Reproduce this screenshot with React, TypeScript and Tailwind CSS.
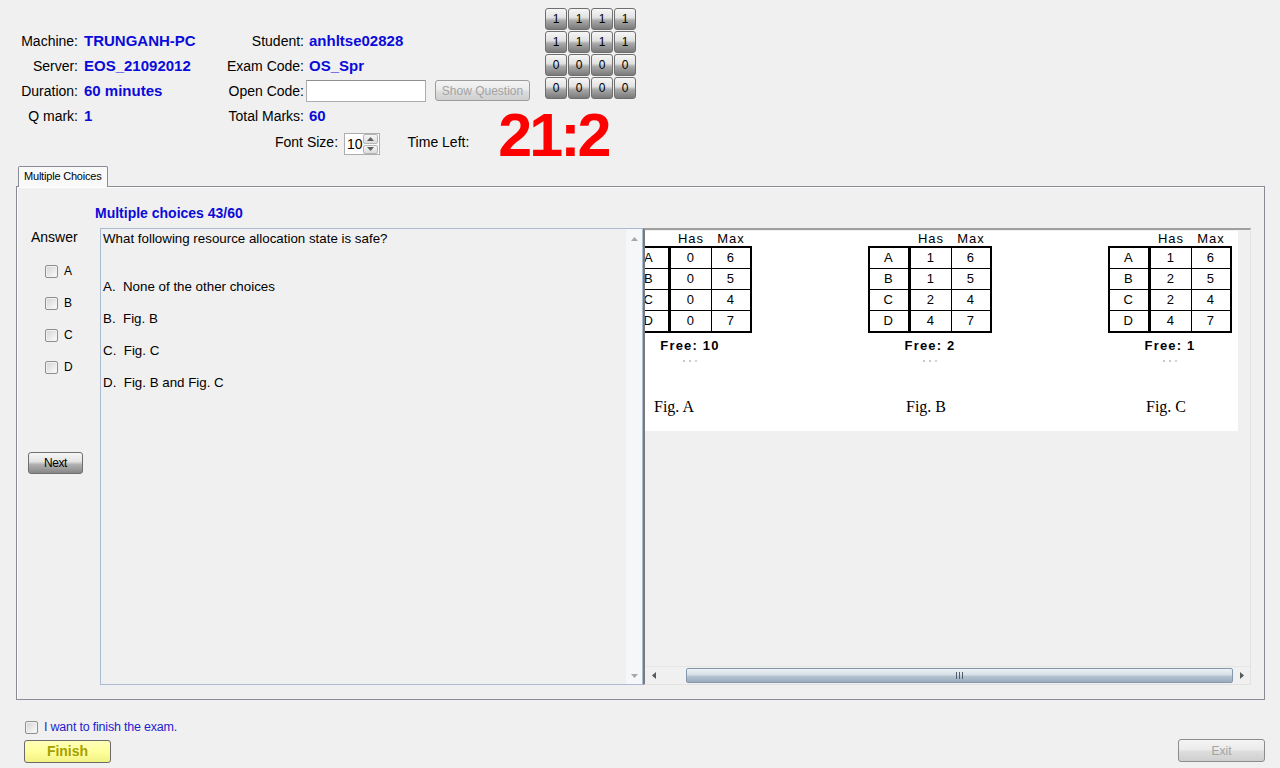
import React from "react";

const BLUE = "text-[#0b0bd9]";

function Check() {
  return (
    <span className="block w-[13px] h-[13px] shrink-0 border border-[#8f8f8f] rounded-[2px] bg-[linear-gradient(135deg,#d2d2d2,#fdfdfd)] shadow-[inset_0_0_0_1px_#f2f2f2]" />
  );
}

function Tri({ dir, color = "#8a8a8a" }: { dir: "up" | "down" | "left" | "right"; color?: string }) {
  const pts: Record<string, string> = {
    up: "0,4 3.5,0 7,4",
    down: "0,0 3.5,4 7,0",
    left: "4,0 0,3.5 4,7",
    right: "0,0 4,3.5 0,7",
  };
  const w = dir === "up" || dir === "down" ? 7 : 4;
  const h = dir === "up" || dir === "down" ? 4 : 7;
  return (
    <svg width={w} height={h} viewBox={`0 0 ${w} ${h}`}>
      <polygon points={pts[dir]} fill={color} />
    </svg>
  );
}

function Row({
  l1,
  v1,
  l2,
  children,
}: {
  l1: string;
  v1: string;
  l2: string;
  children: React.ReactNode;
}) {
  return (
    <div className="flex items-center h-[25px] text-[14px] leading-[16px]">
      <span className="w-[58px] text-right">{l1}</span>
      <span className={`ml-[6px] w-[116px] font-bold text-[15px] ${BLUE}`}>{v1}</span>
      <span className="w-[104px] text-right">{l2}</span>
      {children}
    </div>
  );
}

function GridBtn({ t }: { t: string }) {
  return (
    <div className="w-[22px] h-[22px] rounded-[3px] border border-[#6f6f6f] bg-[linear-gradient(to_bottom,#f6f6f6_0%,#e2e2e2_42%,#a9a9a9_58%,#7a7a7a_100%)] flex items-center justify-center text-[12px] leading-none text-black">
      {t}
    </div>
  );
}

function Header() {
  return (
    <div className="h-[166px] flex items-start shrink-0">
      <div className="w-[530px] shrink-0 pl-[20px] pt-[28px] flex flex-col whitespace-nowrap">
        <Row l1="Machine:" v1="TRUNGANH-PC" l2="Student:">
          <span className={`ml-[5px] font-bold text-[15px] ${BLUE}`}>anhltse02828</span>
        </Row>
        <Row l1="Server:" v1="EOS_21092012" l2="Exam Code:">
          <span className={`ml-[5px] font-bold text-[15px] ${BLUE}`}>OS_Spr</span>
        </Row>
        <Row l1="Duration:" v1="60 minutes" l2="Open Code:">
          <div className="ml-[2px] w-[120px] h-[22px] bg-white border border-[#abadb3] border-t-[#8e8f8f]" />
          <div className="ml-[9px] w-[95px] h-[21px] rounded-[3px] border border-[#9c9c9c] bg-[linear-gradient(to_bottom,#f4f4f4_0%,#ebebeb_45%,#dddddd_55%,#cfcfcf_100%)] flex items-center justify-center text-[12px] text-[#a3a3a3]">
            Show Question
          </div>
        </Row>
        <Row l1="Q mark:" v1="1" l2="Total Marks:">
          <span className={`ml-[5px] font-bold text-[15px] ${BLUE}`}>60</span>
        </Row>
        <div className="flex items-start h-[32px]">
          <span className="ml-[255px] mt-[6px] w-[63px] text-right text-[14px] leading-[16px]">Font Size:</span>
          <div className="ml-[6px] mt-[5px] w-[39px] h-[22px] bg-white border border-[#abadb3] flex items-center">
            <span className="flex-1 pl-[2px] text-[14px] leading-[16px]">10</span>
            <div className="w-[15px] h-[20px] mr-[1px] flex flex-col gap-[1px]">
              <div className="flex-1 border border-[#b5b5b5] rounded-[2px] bg-[linear-gradient(to_bottom,#f5f5f5,#dcdcdc)] flex items-center justify-center">
                <Tri dir="up" color="#606060" />
              </div>
              <div className="flex-1 border border-[#b5b5b5] rounded-[2px] bg-[linear-gradient(to_bottom,#f5f5f5,#dcdcdc)] flex items-center justify-center">
                <Tri dir="down" color="#606060" />
              </div>
            </div>
          </div>
          <span className="ml-[28px] mt-[6px] text-[14px] leading-[16px]">Time Left:</span>
          <span className="ml-[29px] -mt-[23px] text-[61px] leading-none font-bold text-[#ff0000] tracking-[-3px]">
            21:2
          </span>
        </div>
      </div>
      <div className="ml-[15px] mt-[8px] grid grid-cols-4 gap-[1px]">
        {["1", "1", "1", "1", "1", "1", "1", "1", "0", "0", "0", "0", "0", "0", "0", "0"].map((t, i) => (
          <GridBtn key={i} t={t} />
        ))}
      </div>
    </div>
  );
}

type FigProps = {
  rows: [string, string, string][];
  free: string;
  label: string;
  labelX: number;
};

function Figure({ rows, free, label, labelX }: FigProps) {
  return (
    <div className="w-[240px] shrink-0 flex flex-col font-['Liberation_Sans',Arial,sans-serif]">
      <div className="w-[124px] h-[15px] flex text-[13px] leading-[15px] tracking-[1px]">
        <span className="ml-[43px] w-[40px] text-center">Has</span>
        <span className="ml-[1px] w-[38px] text-center">Max</span>
      </div>
      <div className="w-[124px] border-2 border-black flex flex-col">
        {rows.map((r, i) => (
          <div
            key={i}
            className={`flex text-[13px] tracking-[1.5px] ${i > 0 ? "h-[21px] leading-[20px] border-t border-black" : "h-[20px] leading-[20px]"}`}
          >
            <span className="w-[38px] text-center border-r-[3px] border-black box-content">{r[0]}</span>
            <span className="w-[40px] text-center border-r border-black box-content">{r[1]}</span>
            <span className="w-[38px] text-center">{r[2]}</span>
          </div>
        ))}
      </div>
      <div className="w-[124px] mt-[5px] h-[16px] leading-[16px] text-center text-[13px] font-bold tracking-[1.2px]">
        {free}
      </div>
      <div className="w-[124px] mt-[3px] h-[8px] flex justify-center gap-[4px] items-center">
        <span className="w-[2px] h-[2px] bg-[#c8c8c8]" />
        <span className="w-[2px] h-[2px] bg-[#c8c8c8]" />
        <span className="w-[2px] h-[2px] bg-[#d5d5d5]" />
      </div>
      <div
        className="mt-[33px] h-[18px] leading-[18px] text-[16px] font-['Liberation_Serif','Times_New_Roman',serif]"
        style={{ marginLeft: labelX }}
      >
        {label}
      </div>
    </div>
  );
}

function ImagePanel() {
  return (
    <div className="w-[608px] h-full border-t-2 border-l-2 border-t-[#a0a0a0] border-l-[#7a7a7a] border-r border-b border-r-[#e2e2e2] border-b-[#e2e2e2] flex flex-col">
      <div className="flex-1 pt-[1px]">
        <div className="w-[593px] h-[200px] bg-white overflow-hidden">
          <div className="flex ml-[-17px]">
            <Figure
              rows={[
                ["A", "0", "6"],
                ["B", "0", "5"],
                ["C", "0", "4"],
                ["D", "0", "7"],
              ]}
              free="Free: 10"
              label="Fig. A"
              labelX={26}
            />
            <Figure
              rows={[
                ["A", "1", "6"],
                ["B", "1", "5"],
                ["C", "2", "4"],
                ["D", "4", "7"],
              ]}
              free="Free: 2"
              label="Fig. B"
              labelX={38}
            />
            <Figure
              rows={[
                ["A", "1", "6"],
                ["B", "2", "5"],
                ["C", "2", "4"],
                ["D", "4", "7"],
              ]}
              free="Free: 1"
              label="Fig. C"
              labelX={38}
            />
          </div>
        </div>
      </div>
      <div className="h-[17px] mb-[1px] flex items-center bg-[#f0f0f0] border-t border-[#e6e6e6]">
        <div className="w-[17px] h-full flex items-center justify-center">
          <Tri dir="left" color="#5a5a5a" />
        </div>
        <div className="flex-1 h-full flex items-center">
          <div className="ml-[24px] flex-1 h-[15px] rounded-[2px] border border-[#8598ab] bg-[linear-gradient(to_bottom,#eef1f4_0%,#d6dee6_45%,#b7c5d2_55%,#98abbd_100%)] flex items-center justify-center gap-[2px]">
            <span className="w-[1px] h-[7px] bg-[#4f5f70]" />
            <span className="w-[1px] h-[7px] bg-[#4f5f70]" />
            <span className="w-[1px] h-[7px] bg-[#4f5f70]" />
          </div>
        </div>
        <div className="w-[17px] h-full flex items-center justify-center">
          <Tri dir="right" color="#5a5a5a" />
        </div>
      </div>
    </div>
  );
}

function Tabs() {
  return (
    <div className="flex flex-col shrink-0">
      <div className="h-[21px] ml-[18px] w-[90px] relative z-10 -mb-[1px] border border-b-0 border-[#898c95] bg-[#f9f9f9] rounded-t-[2px] text-[11px] leading-[19px] pl-[5px] whitespace-nowrap tracking-[-0.2px]">
        Multiple Choices
      </div>
      <div className="ml-[16px] w-[1249px] h-[514px] border border-[#898c95] bg-[#f0f0f0] shadow-[inset_1px_1px_0_#ffffff] flex flex-col">
        <div className={`ml-[78px] mt-[18px] h-[16px] leading-[16px] text-[14px] font-bold ${BLUE}`}>
          Multiple choices 43/60
        </div>
        <div className="mt-[7px] h-[457px] flex">
          <div className="w-[83px] flex flex-col">
            <span className="ml-[14px] mt-[1px] h-[16px] leading-[16px] text-[14px]">Answer</span>
            <div className="mt-[10px] flex flex-col">
              {["A", "B", "C", "D"].map((l) => (
                <div key={l} className="h-[32px] flex items-center pl-[28px] gap-[6px] text-[12px]">
                  <Check />
                  <span>{l}</span>
                </div>
              ))}
            </div>
            <div className="ml-[11px] mt-[69px] w-[55px] h-[22px] rounded-[3px] border border-[#6f6f6f] bg-[linear-gradient(to_bottom,#f6f6f6_0%,#e4e4e4_42%,#b0b0b0_58%,#878787_100%)] flex items-center justify-center text-[12px] tracking-[-0.4px]">
              Next
            </div>
          </div>
          <div className="w-[543px] h-full border border-[#a9bcd3] bg-[#f0f0f0] flex">
            <div className="flex-1 pl-[2px] pt-[2px] text-[13.33px] leading-[16px] whitespace-nowrap">
              <div>What following resource allocation state is safe?</div>
              <div className="mt-[32px]">A.&nbsp; None of the other choices</div>
              <div className="mt-[16px]">B.&nbsp; Fig. B</div>
              <div className="mt-[16px]">C.&nbsp; Fig. C</div>
              <div className="mt-[16px]">D.&nbsp; Fig. B and Fig. C</div>
            </div>
            <div className="w-[17px] h-full bg-[#f6f7f8] border-l border-[#eef0f2] flex flex-col justify-between items-center pt-[8px] pb-[6px]">
              <Tri dir="up" color="#a8a8a8" />
              <Tri dir="down" color="#a8a8a8" />
            </div>
          </div>
          <ImagePanel />
        </div>
      </div>
    </div>
  );
}

function Bottom() {
  return (
    <div className="flex-1 flex flex-col">
      <div className="mt-[20px] ml-[25px] h-[14px] flex items-center">
        <Check />
        <span className="ml-[6px] text-[12.5px] leading-[14px] text-[#1f1fcf] tracking-[-0.2px]">
          I want to finish the exam.
        </span>
      </div>
      <div className="mt-[6px] flex justify-between items-start">
        <div className="ml-[24px] w-[87px] h-[23px] rounded-[3px] border border-[#6a6a6a] bg-[linear-gradient(to_bottom,#ffffb8_0%,#ffff9c_50%,#f2f284_100%)] flex items-center justify-center text-[14px] font-bold text-[#a3a000]">
          Finish
        </div>
        <div className="mr-[15px] -mt-[1px] w-[87px] h-[23px] rounded-[3px] border border-[#8c8c8c] bg-[linear-gradient(to_bottom,#f4f4f4_0%,#ebebeb_45%,#dddddd_55%,#cfcfcf_100%)] flex items-center justify-center text-[12px] text-[#a3a3a3]">
          Exit
        </div>
      </div>
    </div>
  );
}

export default function App() {
  return (
    <div className="w-[1280px] h-[768px] bg-[#f0f0f0] overflow-hidden flex flex-col font-['Liberation_Sans',Arial,sans-serif] text-black">
      <Header />
      <Tabs />
      <Bottom />
    </div>
  );
}
